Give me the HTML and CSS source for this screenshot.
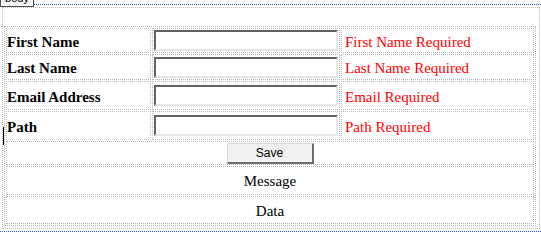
FILE: index.html
```html
<!DOCTYPE html>
<html>
<head>
<meta charset="utf-8">
<link rel="stylesheet" href="styles.css">
</head>
<body>
<div class="tab">body</div>
<div class="page">
  <div class="form">
    <table class="grid">
      <tr class="r1">
        <td class="label">First Name</td>
        <td class="field"><input class="box" type="text"></td>
        <td class="err">First Name Required</td>
      </tr>
      <tr class="r2">
        <td class="label">Last Name</td>
        <td class="field"><input class="box" type="text"></td>
        <td class="err">Last Name Required</td>
      </tr>
      <tr class="r3">
        <td class="label">Email Address</td>
        <td class="field"><input class="box" type="text"></td>
        <td class="err">Email Required</td>
      </tr>
      <tr class="r4">
        <td class="label">Path</td>
        <td class="field"><input class="box" type="text"></td>
        <td class="err">Path Required</td>
      </tr>
      <tr class="r5">
        <td class="center" colspan="3"><button class="btn" type="button">Save</button></td>
      </tr>
      <tr class="r6">
        <td class="center text" colspan="3">Message</td>
      </tr>
      <tr class="r7">
        <td class="center text" colspan="3">Data</td>
      </tr>
    </table>
  </div>
</div>
<div class="caret"></div>
</body>
</html>
```

FILE: styles.css
```css
html, body {
  margin: 0;
  padding: 0;
  background: #ffffff;
}

body {
  font-family: "Liberation Serif", "Times New Roman", serif;
  font-size: 15px;
  color: #000000;
  position: relative;
  width: 541px;
  height: 235px;
  overflow: hidden;
}

.tab {
  position: absolute;
  left: 0;
  top: -9px;
  width: 32px;
  height: 14px;
  border: 1px solid #505050;
  background: #f4f4f4;
  font-family: "Liberation Sans", Arial, sans-serif;
  font-size: 11px;
  line-height: 12px;
  text-align: center;
  color: #000;
  z-index: 2;
}

.page {
  margin-top: 4px;
  border-top: 1px dotted #2f55b0;
  border-bottom: 1px dotted #2f55b0;
  padding: 2px 0 2px 2px;
}

.form {
  width: 535px;
  border: 1px dotted #b8b8b8;
  padding: 18px 0 2px 1px;
}

.grid {
  width: 532px;
  border: 1px dotted #b8b8b8;
  border-spacing: 1px;
  border-collapse: separate;
}

.grid td {
  box-sizing: border-box;
  border: 1px dotted #b8b8b8;
  padding: 0 1px;
  vertical-align: middle;
}

.r1 td { height: 25px; }
.r2 td { height: 26px; }
.r3 td { height: 29px; }
.r4 td { height: 29px; }
.r5 td { height: 24px; }
.r6 td { height: 29px; }
.r7 td { height: 28px; }

.grid .label {
  width: 145px;
  font-weight: bold;
  white-space: nowrap;
  padding: 3px 0 0 0;
}

.field {
  width: 188px;
  line-height: 0;
}

.grid .err {
  color: #ff0000;
  padding: 3px 0 0 3px;
  white-space: nowrap;
}

.box {
  box-sizing: border-box;
  width: 184px;
  height: 21px;
  margin: 0;
  padding: 0;
  background: #ffffff;
  border-style: solid;
  border-width: 2px;
  border-color: #626262 #e6e6e6 #e6e6e6 #626262;
  outline: none;
}

.center {
  text-align: center;
}

.btn {
  box-sizing: border-box;
  width: 87px;
  height: 21px;
  margin: 0;
  padding: 0;
  background: #f0f0f0;
  border-style: solid;
  border-width: 1px 2px 2px 1px;
  border-color: #d8d8d8 #6e6e6e #6e6e6e #d8d8d8;
  font-family: "Liberation Sans", Arial, sans-serif;
  font-size: 12px;
  color: #000;
  vertical-align: middle;
}

.grid .text {
  line-height: 17px;
  padding-top: 2px;
}

.caret {
  position: absolute;
  left: 3px;
  top: 127px;
  width: 1px;
  height: 18px;
  background: #000000;
}
```
